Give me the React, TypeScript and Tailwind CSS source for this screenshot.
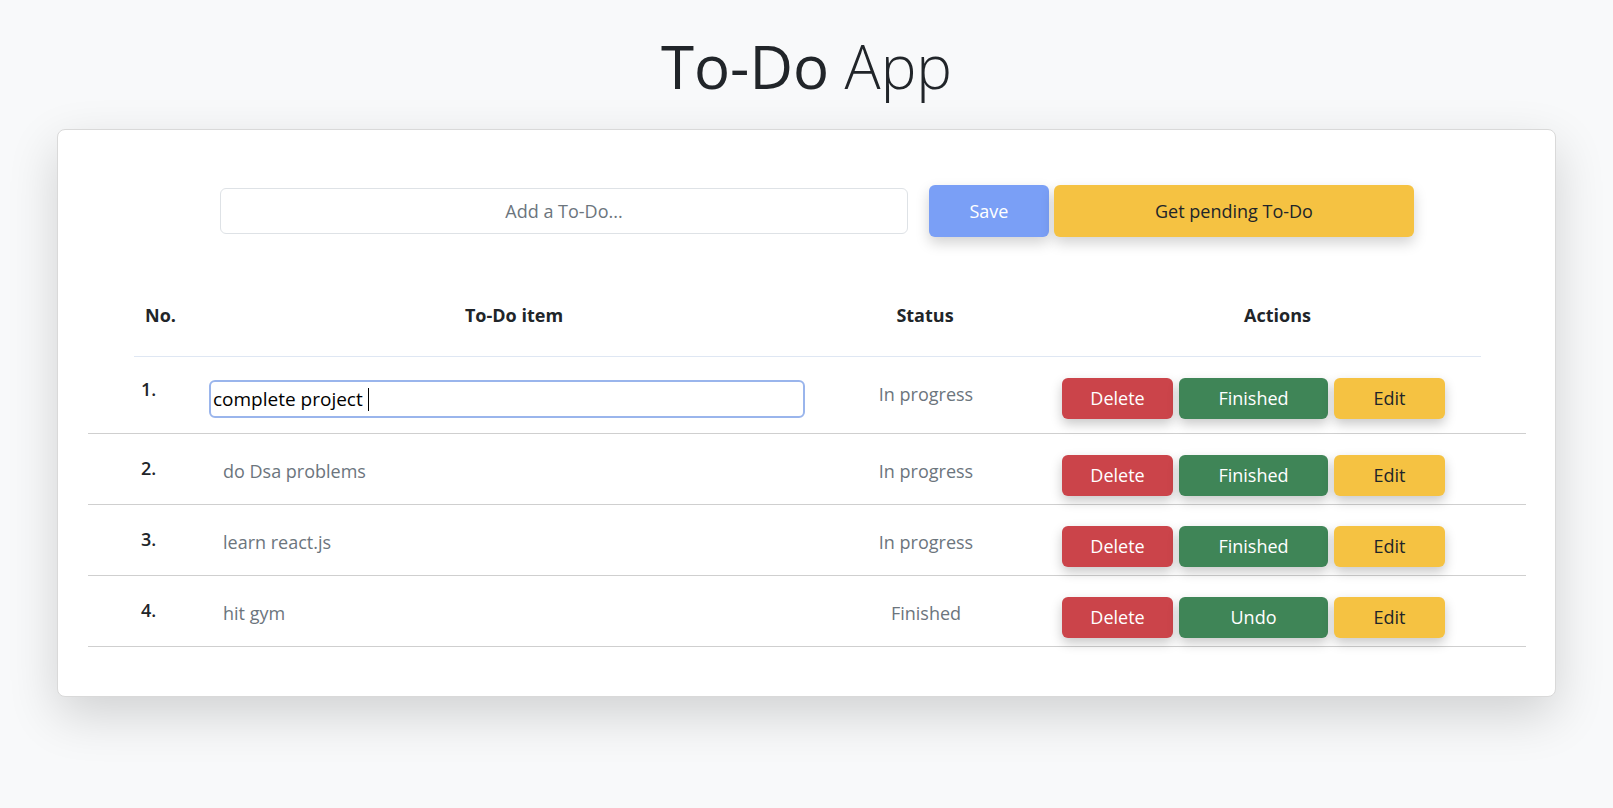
import React from "react";

type Todo = { id: number; text: string; finished: boolean; editing?: boolean };

const todos: Todo[] = [
  { id: 1, text: "complete project ", finished: false, editing: true },
  { id: 2, text: "do Dsa problems", finished: false },
  { id: 3, text: "learn react.js", finished: false },
  { id: 4, text: "hit gym", finished: true },
];

function ActionButtons({ finished }: { finished: boolean }) {
  return (
    <div className="flex gap-[6px]">
      <button className="h-[41px] w-[111px] rounded-md bg-[#cb444a] text-[18px] text-white shadow-[0_5px_12px_rgba(0,0,0,0.22)]">
        Delete
      </button>
      <button className="h-[41px] w-[149px] rounded-md bg-[#3f8557] text-[18px] text-white shadow-[0_5px_12px_rgba(0,0,0,0.22)]">
        {finished ? "Undo" : "Finished"}
      </button>
      <button className="h-[41px] w-[111px] rounded-md bg-[#f5c242] text-[18px] text-[#212529] shadow-[0_5px_12px_rgba(0,0,0,0.22)]">
        Edit
      </button>
    </div>
  );
}

export default function App() {
  return (
    <div className="min-h-screen bg-[#f8f9fa] font-['Open_Sans','Noto_Sans',sans-serif] text-[#212529]">
      <h1 className="pt-[30px] text-center text-[60px] font-light leading-[72px]">
        <span className="font-normal">To-Do</span> App
      </h1>

      {/* main card */}
      <div className="ml-[57px] mt-[27px] h-[568px] w-[1499px] rounded-lg border border-[#d9d9d9] bg-white shadow-[0_18px_50px_rgba(0,0,0,0.16)]">
        {/* input row */}
        <div className="flex h-[52px] items-center pl-[162px] mt-[55px]">
          <div className="flex h-[46px] w-[688px] items-center justify-center rounded-md border border-[#dee2e6] text-[18px] text-[#6c757d]">
            Add a To-Do...
          </div>
          <button className="ml-[21px] h-[52px] w-[120px] rounded-md bg-[#7a9ff6] text-[18px] text-white shadow-[0_6px_14px_rgba(0,0,0,0.18)]">
            Save
          </button>
          <button className="ml-[5px] h-[52px] w-[360px] rounded-md bg-[#f5c242] text-[18px] text-[#212529] shadow-[0_6px_14px_rgba(0,0,0,0.18)]">
            Get pending To-Do
          </button>
        </div>

        {/* header */}
        <div className="ml-[76px] mt-[40px] flex h-[80px] w-[1347px] border-b border-[#dfe7f3] pt-[26px] text-[18px] font-bold leading-6">
          <div className="w-[56px] pl-[11px]">No.</div>
          <div className="w-[648px] text-center">To-Do item</div>
          <div className="w-[174px] text-center">Status</div>
          <div className="w-[469px] pl-[62px] text-center">Actions</div>
        </div>

        {/* rows */}
        <div className="ml-[30px] w-[1438px]">
          {todos.map((t, i) => (
            <div
              key={t.id}
              className={`flex items-start border-b border-[#cfcfcf] ${i === 0 ? "h-[77px]" : "h-[71px]"}`}
            >
              <div className={`w-[121px] pl-[53px] text-[18px] font-semibold leading-6 ${i === 0 ? "pt-[20px]" : "pt-[22px]"}`}>
                {t.id}.
              </div>
              <div className="w-[596px]">
                {t.editing ? (
                  <div className="mt-[23px] flex h-[38px] items-center rounded-md border-2 border-[#9ab5ec] pl-[2px] text-[19px] text-black">
                    <span className="whitespace-pre">{t.text}</span>
                    <span className="h-[23px] w-px bg-black" />
                  </div>
                ) : (
                  <div className="pl-[14px] pt-[25px] text-[18px] leading-6 text-[#6c757d]">{t.text}</div>
                )}
              </div>
              <div className="w-[242px] pt-[25px] text-center text-[18px] leading-6 text-[#6c757d]">
                {t.finished ? "Finished" : "In progress"}
              </div>
              <div className="ml-[15px] pt-[21px]">
                <ActionButtons finished={t.finished} />
              </div>
            </div>
          ))}
        </div>
      </div>
    </div>
  );
}
